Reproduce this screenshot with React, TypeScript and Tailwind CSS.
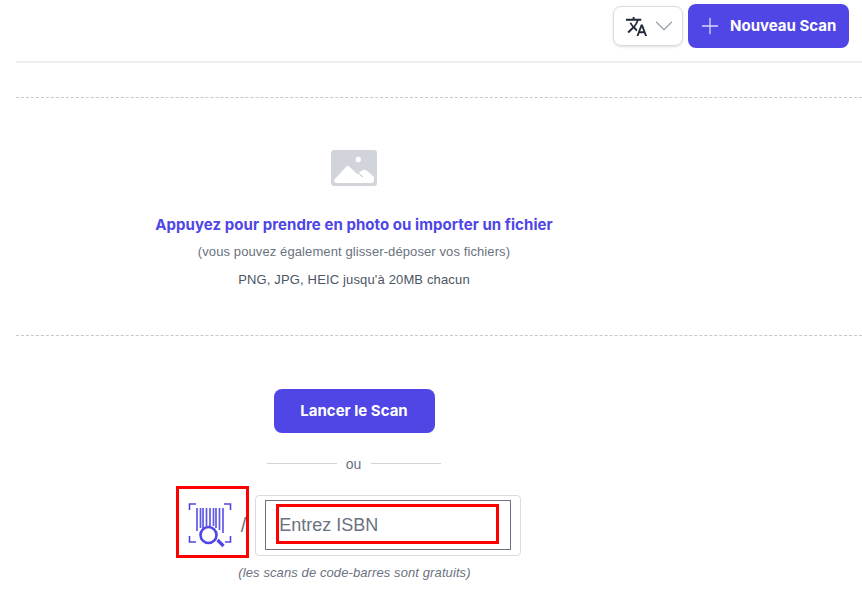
import React from "react";
import { ChevronDown, Plus } from "lucide-react";
import { MdTranslate } from "react-icons/md";

const BarcodeScan = () => (
  <svg width="44" height="46" viewBox="0 0 44 46" fill="none" stroke="#4f46e5">
    <path d="M8 2H1.500V8M36 2h6.500V8M1.500 34v6H8M42.500 34v6H37" strokeWidth="1.600" />
    <path d="M9 6v23M12.500 6v20M15 6v20M18.500 6v18M22 6v18M25.500 6v18M28 6v20M31.500 6v22M35 6v25" strokeWidth="1.700" opacity="0.9" />
    <circle cx="20.500" cy="33" r="8" fill="#fff" strokeWidth="2.600" />
    <path d="M29.500 38l6 6" strokeWidth="3.200" />
  </svg>
);

const App = () => {
  return (
    <div className="w-[862px] h-[601px] overflow-hidden bg-white pl-4 font-['Liberation_Sans',sans-serif]">
      <header className="h-[63px] border-b-2 border-[#eceded] flex justify-end items-start gap-[5px] pt-1 pr-[13px]">
        <button className="mt-[2px] w-[70px] h-[40px] border border-[#d9dbe0] rounded-lg flex items-center pl-[11px] shadow-sm">
          <MdTranslate size={23} className="text-[#1f2937] mr-[1px]" />
          <ChevronDown size={30} strokeWidth={1} className="text-[#9ca3af]" />
        </button>
        <button className="w-[161px] h-[44px] bg-[#4f46e5] rounded-lg flex items-center pl-[9px] gap-[7px] text-white text-[15px] font-bold font-['Inter',sans-serif]">
          <Plus size={26} strokeWidth={1.2} className="text-[#d9d7fa]" />
          Nouveau Scan
        </button>
      </header>

      <section className="mt-[34px] h-[239px] border-y border-dashed border-[#c8c8c8] w-[846px] flex flex-col items-center pr-[170px]">
        <svg className="mt-[52px]" width="46" height="36" viewBox="0 0 46 36">
          <rect width="46" height="36" rx="3" fill="#d1d5db" />
          <circle cx="27.300" cy="9.500" r="2.700" fill="#fff" />
          <path d="M3 30L14.500 17.500Q16.700 14.500 19 17L26 24L31 20.500Q33.300 19 35.500 20.500L43 27V30Q43 33 40 33H6Q3 33 3 30Z" fill="#fff" />
          <path d="M18 15.500L32 27" stroke="#d1d5db" strokeWidth="1.300" />
        </svg>
        <div className="mt-[29px] text-[#4f46e5] text-[15px] leading-[20px] font-bold font-['Inter',sans-serif] tracking-[0.06px]">
          Appuyez pour prendre en photo ou importer un fichier
        </div>
        <div className="mt-[7px] text-[#6b7280] text-[13px] leading-[20px] tracking-[0.1px]">
          (vous pouvez également glisser-déposer vos fichiers)
        </div>
        <div className="mt-[8px] text-[#4b5563] text-[13px] leading-[20px] tracking-[0.15px]">
          PNG, JPG, HEIC jusqu'à 20MB chacun
        </div>
      </section>

      <section className="w-[846px] flex flex-col items-center pr-[170px]">
        <button className="mt-[53px] w-[161px] h-[44px] bg-[#4f46e5] rounded-lg text-white text-[15px] font-bold font-['Inter',sans-serif]">
          Lancer le Scan
        </button>
        <div className="mt-[21px] flex items-center">
          <div className="w-[70px] h-px mb-[2px] bg-[#d1d5db]" />
          <span className="ml-[9px] mr-[10px] text-sm leading-5 text-[#6b7280]">ou</span>
          <div className="w-[70px] h-px mb-[2px] bg-[#d1d5db]" />
        </div>
        <div className="mt-[12px] mr-[11px] flex items-start">
          <div className="w-[73px] h-[72px] border-[3px] border-[#ff0000] pl-[9px] pt-[13px]">
            <BarcodeScan />
          </div>
          <span className="mt-[27px] ml-[-8px] mr-[9px] text-xl leading-6 text-[#6b7280]">/</span>
          <div className="relative mt-[9px] w-[266px] h-[61px] border border-[#d9dbe0] rounded-[4px] pt-1 pb-[5px] px-[9px]">
            <div className="h-full border border-[#6b7280] pl-[13px] flex items-center text-lg text-[#6b7280]">
              Entrez ISBN
            </div>
            <div className="absolute left-[20px] top-[8px] w-[223px] h-[40px] border-[3px] border-[#ff0000]" />
          </div>
        </div>
        <div className="mt-[5px] ml-[1px] text-[13px] italic leading-5 text-[#6b7280] tracking-[0.1px]">
          (les scans de code-barres sont gratuits)
        </div>
      </section>
    </div>
  );
};

export default App;
